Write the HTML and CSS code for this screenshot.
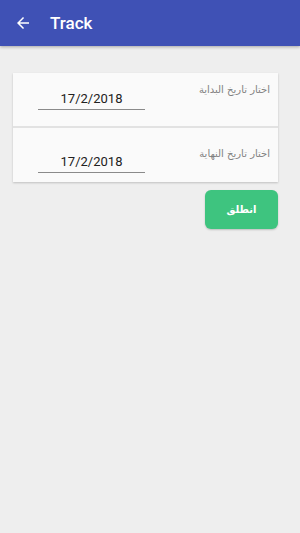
FILE: index.html
```html
<!DOCTYPE html>
<html>
<head>
<meta charset="utf-8">
<link rel="stylesheet" href="styles.css">
</head>
<body>
<header class="appbar">
  <svg class="back" width="18" height="18" viewBox="0 0 24 24"><path d="M20 11H7.83l5.59-5.59L12 4l-8 8 8 8 1.41-1.41L7.83 13H20v-2z" fill="#fff"/></svg>
  <span class="title">Track</span>
</header>
<main class="content">
  <section class="card">
    <div class="row">
      <div class="label">اختار تاريخ البداية</div>
      <div class="field">17/2/2018</div>
    </div>
    <div class="row row-end">
      <div class="label">اختار تاريخ النهاية</div>
      <div class="field">17/2/2018</div>
    </div>
  </section>
  <div class="actions">
    <button class="go">انطلق</button>
  </div>
</main>
</body>
</html>
```
FILE: styles.css
```css
html, body {
  margin: 0;
  padding: 0;
  background: #eeeeee;
  font-family: Roboto, "DejaVu Sans", sans-serif;
  width: 300px;
  height: 533px;
  overflow: hidden;
}
.appbar {
  height: 46px;
  background: #3f51b5;
  display: flex;
  align-items: center;
  box-shadow: 0 1px 3px rgba(0,0,0,0.3);
}
.back {
  margin-left: 14px;
  width: 18px;
  height: 18px;
}
.title {
  color: #fff;
  font-size: 17px;
  font-weight: 500;
  margin-left: 18px;
}
.content {
  padding: 27px 22px 0 13px;
}
.card {
  background: #e2e2e2;
  display: flex;
  flex-direction: column;
  gap: 2px;
  box-shadow: 0 1px 2px rgba(0,0,0,0.2);
}
.row {
  background: #fafafa;
  height: 53px;
  position: relative;
}
.row-end { height: 54px; }
.label {
  position: absolute;
  right: 8px;
  top: 11px;
  font-family: "DejaVu Sans", sans-serif;
  font-size: 10px;
  color: #808080;
  direction: rtl;
}
.field {
  position: absolute;
  left: 25px;
  top: 18px;
  width: 107px;
  text-align: center;
  font-size: 13px;
  color: #212121;
  padding-bottom: 3px;
  border-bottom: 1px solid #8a8a8a;
}
.row-end .label { top: 20px; }
.row-end .field { top: 26px; }
.actions {
  display: flex;
  justify-content: flex-end;
  margin-top: 8px;
}
.go {
  width: 73px;
  height: 39px;
  border: none;
  border-radius: 6px;
  background: #3ec47f;
  color: #fff;
  font-family: "DejaVu Sans", sans-serif;
  font-weight: bold;
  font-size: 10px;
  box-shadow: 0 1px 2px rgba(0,0,0,0.2);
  padding: 0;
}
```
